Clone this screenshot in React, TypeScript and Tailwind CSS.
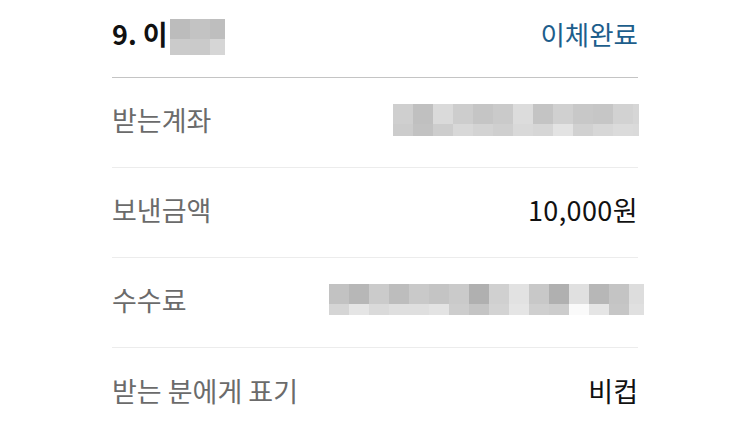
import React from 'react';

type Cell = { w: number; c: string };

// blurred (mosaic) blocks, top row / bottom row
const headerMask: { top: Cell[]; bottom: Cell[] } = {
  top: [{ w: 20, c: '#bcbcbc' }, { w: 20, c: '#c3c3c3' }, { w: 15, c: '#bebebe' }],
  bottom: [{ w: 20, c: '#cbcbcb' }, { w: 20, c: '#cacaca' }, { w: 15, c: '#d6d6d6' }],
};

const toCells = (list: string[], last: number): Cell[] =>
  list.map((c, i) => ({ w: i === list.length - 1 ? last : 20, c }));

const accountMask = {
  top: toCells(['#cfcfcf', '#c0c0c0', '#dadada', '#cdcdcd', '#c5c5c5', '#cacaca', '#dcdcdc', '#c4c4c4', '#d0d0d0', '#c8c8c8', '#c6c6c6', '#d2d2d2', '#d6d6d6'], 6),
  bottom: toCells(['#cccccc', '#c2c2c2', '#cdcdcd', '#d8d8d8', '#d3d3d3', '#cfcfcf', '#d9d9d9', '#d6d6d6', '#e3e3e3', '#d1d1d1', '#d7d7d7', '#dbdbdb', '#dadada'], 6),
};

const feeMask = {
  top: toCells(['#c2c2c2', '#b7b7b7', '#cbcbcb', '#bdbdbd', '#c9c9c9', '#c4c4c4', '#cacaca', '#b0b0b0', '#d0d0d0', '#e2e2e2', '#c8c8c8', '#b0b0b0', '#e0e0e0', '#b7b7b7', '#c4c4c4', '#dddddd'], 15),
  bottom: toCells(['#d5d5d5', '#e5e5e5', '#dadada', '#dfdfdf', '#dfdfdf', '#e3e3e3', '#cdcdcd', '#c4c4c4', '#d3d3d3', '#e5e5e5', '#cfcfcf', '#cccccc', '#fafafa', '#e5e5e5', '#c6c6c6', '#e0e0e0'], 15),
};

const Mosaic: React.FC<{ top: Cell[]; bottom: Cell[]; topH: number; bottomH: number }> = ({ top, bottom, topH, bottomH }) => (
  <div className="flex flex-col">
    <div className="flex">
      {top.map((b, i) => <div key={i} style={{ width: b.w, height: topH, background: b.c }} />)}
    </div>
    <div className="flex">
      {bottom.map((b, i) => <div key={i} style={{ width: b.w, height: bottomH, background: b.c }} />)}
    </div>
  </div>
);

const Row: React.FC<{ label: string; children: React.ReactNode; last?: boolean }> = ({ label, children, last }) => (
  <div className={`flex h-[90px] items-center justify-between ${last ? '' : 'border-b border-[#ececec]'}`}>
    <span className="mb-[4px] text-[27px] text-[#6b6b6b]">{label}</span>
    {children}
  </div>
);

export default function App() {
  return (
    <div className="w-[750px] h-[434px] bg-white overflow-hidden font-['Noto_Sans_CJK_KR','Noto_Sans',sans-serif]">
      <div className="mx-[112px]">
        <div className="flex h-[78px] items-center justify-between border-b border-[#c4c4c4] pb-[8px]">
          <div className="flex items-center">
            <span className="text-[27px] font-bold text-[#111]">9. 이</span>
            <div className="ml-[2px] mt-[4px]">
              <Mosaic top={headerMask.top} bottom={headerMask.bottom} topH={20} bottomH={16} />
            </div>
          </div>
          <span className="mb-[2px] text-[26.5px] text-[#1d5e8c]">이체완료</span>
        </div>
        <Row label="받는계좌">
          <div className="mb-[6px] mr-[-1px]">
            <Mosaic top={accountMask.top} bottom={accountMask.bottom} topH={20} bottomH={12} />
          </div>
        </Row>
        <Row label="보낸금액">
          <span className="mb-[4px] text-[27px] tracking-[0.4px] text-[#111]">10,000원</span>
        </Row>
        <Row label="수수료">
          <div className="mb-[6px] mr-[-6px]">
            <Mosaic top={feeMask.top} bottom={feeMask.bottom} topH={20} bottomH={11} />
          </div>
        </Row>
        <Row label="받는 분에게 표기" last>
          <span className="mb-[4px] text-[27px] text-[#111]">비컵</span>
        </Row>
      </div>
    </div>
  );
}
